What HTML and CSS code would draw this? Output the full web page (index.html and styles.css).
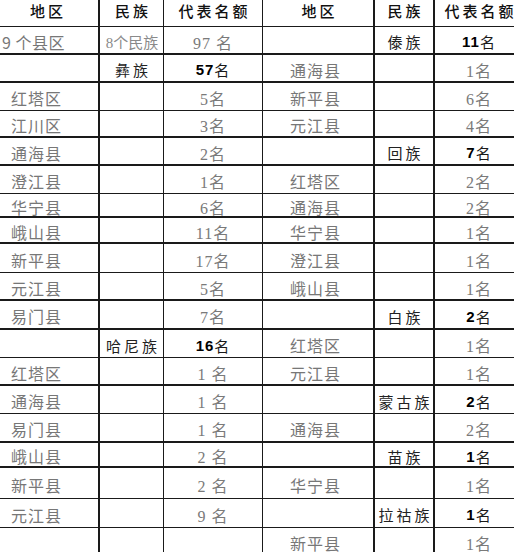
FILE: index.html
```html
<!DOCTYPE html>
<html lang="zh">
<head>
<meta charset="utf-8">
<title>代表名额</title>
<link rel="stylesheet" href="styles.css">
</head>
<body>
<div class="sheet">
  <div class="row h27 thin head">
    <div class="c c1 hd">地区</div><div class="c c2 hd">民族</div><div class="c c3 hd">代表名额</div>
    <div class="c c4 hd">地区</div><div class="c c5 hd">民族</div><div class="c c6 hd">代表名额</div>
  </div>
  <div class="row h28 thick">
    <div class="c c1 dist all">9 个县区</div><div class="c c2 alln">8个民族</div><div class="c c3 num">97 名</div>
    <div class="c c4"></div><div class="c c5 nat">傣族</div><div class="c c6 tot"><span class="n">11</span> 名</div>
  </div>
  <div class="row h28 thick">
    <div class="c c1"></div><div class="c c2 nat">彝族</div><div class="c c3 tot"><span class="n">57</span> 名</div>
    <div class="c c4 dist">通海县</div><div class="c c5"></div><div class="c c6 num">1名</div>
  </div>
  <div class="row h28 thin">
    <div class="c c1 dist">红塔区</div><div class="c c2"></div><div class="c c3 num">5名</div>
    <div class="c c4 dist">新平县</div><div class="c c5"></div><div class="c c6 num">6名</div>
  </div>
  <div class="row h27 thick">
    <div class="c c1 dist">江川区</div><div class="c c2"></div><div class="c c3 num">3名</div>
    <div class="c c4 dist">元江县</div><div class="c c5"></div><div class="c c6 num">4名</div>
  </div>
  <div class="row h28 thick">
    <div class="c c1 dist">通海县</div><div class="c c2"></div><div class="c c3 num">2名</div>
    <div class="c c4"></div><div class="c c5 nat">回族</div><div class="c c6 tot"><span class="n">7</span>名</div>
  </div>
  <div class="row h28 thin">
    <div class="c c1 dist">澄江县</div><div class="c c2"></div><div class="c c3 num">1名</div>
    <div class="c c4 dist">红塔区</div><div class="c c5"></div><div class="c c6 num">2名</div>
  </div>
  <div class="row h24 thick">
    <div class="c c1 dist">华宁县</div><div class="c c2"></div><div class="c c3 num">6名</div>
    <div class="c c4 dist">通海县</div><div class="c c5"></div><div class="c c6 num">2名</div>
  </div>
  <div class="row h26 thick">
    <div class="c c1 dist">峨山县</div><div class="c c2"></div><div class="c c3 num">11名</div>
    <div class="c c4 dist">华宁县</div><div class="c c5"></div><div class="c c6 num">1名</div>
  </div>
  <div class="row h29 thin">
    <div class="c c1 dist">新平县</div><div class="c c2"></div><div class="c c3 num">17名</div>
    <div class="c c4 dist">澄江县</div><div class="c c5"></div><div class="c c6 num">1名</div>
  </div>
  <div class="row h28 thick">
    <div class="c c1 dist">元江县</div><div class="c c2"></div><div class="c c3 num">5名</div>
    <div class="c c4 dist">峨山县</div><div class="c c5"></div><div class="c c6 num">1名</div>
  </div>
  <div class="row h29 thick">
    <div class="c c1 dist">易门县</div><div class="c c2"></div><div class="c c3 num">7名</div>
    <div class="c c4"></div><div class="c c5 nat">白族</div><div class="c c6 tot"><span class="n">2</span>名</div>
  </div>
  <div class="row h28 thin">
    <div class="c c1"></div><div class="c c2 nat">哈尼族</div><div class="c c3 tot"><span class="n">16</span> 名</div>
    <div class="c c4 dist">红塔区</div><div class="c c5"></div><div class="c c6 num">1名</div>
  </div>
  <div class="row h28 thick">
    <div class="c c1 dist">红塔区</div><div class="c c2"></div><div class="c c3 num">1 名</div>
    <div class="c c4 dist">元江县</div><div class="c c5"></div><div class="c c6 num">1名</div>
  </div>
  <div class="row h28 thin">
    <div class="c c1 dist">通海县</div><div class="c c2"></div><div class="c c3 num">1 名</div>
    <div class="c c4"></div><div class="c c5 nat">蒙古族</div><div class="c c6 tot"><span class="n">2</span>名</div>
  </div>
  <div class="row h29 thick">
    <div class="c c1 dist">易门县</div><div class="c c2"></div><div class="c c3 num">1 名</div>
    <div class="c c4 dist">通海县</div><div class="c c5"></div><div class="c c6 num">2名</div>
  </div>
  <div class="row h25 thick">
    <div class="c c1 dist">峨山县</div><div class="c c2"></div><div class="c c3 num">2 名</div>
    <div class="c c4"></div><div class="c c5 nat">苗族</div><div class="c c6 tot"><span class="n">1</span>名</div>
  </div>
  <div class="row h31 thin">
    <div class="c c1 dist">新平县</div><div class="c c2"></div><div class="c c3 num">2 名</div>
    <div class="c c4 dist">华宁县</div><div class="c c5"></div><div class="c c6 num">1名</div>
  </div>
  <div class="row h29 thin">
    <div class="c c1 dist">元江县</div><div class="c c2"></div><div class="c c3 num">9 名</div>
    <div class="c c4"></div><div class="c c5 nat">拉祜族</div><div class="c c6 tot"><span class="n">1</span>名</div>
  </div>
  <div class="row h28 thin">
    <div class="c c1"></div><div class="c c2"></div><div class="c c3"></div>
    <div class="c c4 dist">新平县</div><div class="c c5"></div><div class="c c6 num">1名</div>
  </div>
</div>
</body>
</html>
```
FILE: styles.css
```css
html, body {
  margin: 0;
  padding: 0;
  background: #fff;
}
body {
  width: 514px;
  height: 552px;
  overflow: hidden;
  font-family: "Noto Sans CJK SC", sans-serif;
}
.sheet {
  display: flex;
  flex-direction: column;
  width: 523px;
}
.row {
  display: grid;
  grid-template-columns: 100px 64px 99px 112px 60px 88px;
  box-sizing: border-box;
}
.h24 { height: 24px; }
.h25 { height: 25px; }
.h26 { height: 26px; }
.h27 { height: 27px; }
.h28 { height: 28px; }
.h29 { height: 29px; }
.h31 { height: 31px; }

.c {
  box-sizing: border-box;
  display: flex;
  align-items: center;
  justify-content: center;
  padding-top: 3px;
  border-bottom: 1px solid #1a1a1a;
  border-right: 1px solid #1a1a1a;
  white-space: nowrap;
  overflow: hidden;
}
.thick .c { border-bottom-width: 2px; }
.c1 { border-right-width: 2px; justify-content: flex-start; padding-left: 11px; }
.c4 { border-right-width: 2px; }
.c4.dist { justify-content: flex-start; padding-left: 27px; }
.c5 { border-right-width: 2px; }
.c6 { border-right: 0; }

.head .c {
  align-items: flex-start;
  padding-top: 1px;
}
.hd {
  font-size: 15px;
  line-height: 19px;
  letter-spacing: 3px;
  padding-left: 3px;
  color: #111;
  font-weight: 500;
}
.head .c1 { justify-content: center; padding-left: 0; padding-right: 2px; }

.dist {
  font-size: 16px;
  letter-spacing: 1px;
  color: #777;
  font-weight: 400;
}
.all { padding-left: 2px; letter-spacing: 0.5px; }
.alln {
  font-size: 15px;
  color: #8a8a8a;
  font-weight: 400;
  padding-left: 1px;
  font-family: "Liberation Serif", "Noto Sans CJK SC", serif;
}
.nat {
  font-size: 15px;
  letter-spacing: 3px;
  padding-left: 3px;
  color: #222;
}
.num {
  font-family: "Liberation Serif", "Noto Sans CJK SC", serif;
  font-size: 16px;
  color: #7a7a7a;
  font-weight: 400;
  letter-spacing: 1px;
}
.tot {
  font-family: "Liberation Sans", "Noto Sans CJK SC", sans-serif;
  font-size: 15px;
  color: #1a1a1a;
  font-weight: 400;
  letter-spacing: 1px;
}
.n {
  font-weight: 700;
  color: #000;
}
```
